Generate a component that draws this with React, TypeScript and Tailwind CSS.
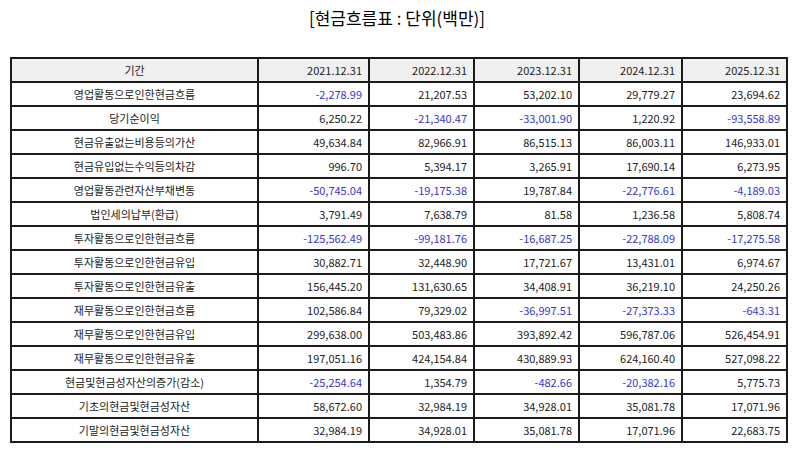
const headers = ['기간', '2021.12.31', '2022.12.31', '2023.12.31', '2024.12.31', '2025.12.31'];

const rows: [string, string[]][] = [
  ['영업활동으로인한현금흐름', ['-2,278.99', '21,207.53', '53,202.10', '29,779.27', '23,694.62']],
  ['당기순이익', ['6,250.22', '-21,340.47', '-33,001.90', '1,220.92', '-93,558.89']],
  ['현금유출없는비용등의가산', ['49,634.84', '82,966.91', '86,515.13', '86,003.11', '146,933.01']],
  ['현금유입없는수익등의차감', ['996.70', '5,394.17', '3,265.91', '17,690.14', '6,273.95']],
  ['영업활동관련자산부채변동', ['-50,745.04', '-19,175.38', '19,787.84', '-22,776.61', '-4,189.03']],
  ['법인세의납부(환급)', ['3,791.49', '7,638.79', '81.58', '1,236.58', '5,808.74']],
  ['투자활동으로인한현금흐름', ['-125,562.49', '-99,181.76', '-16,687.25', '-22,788.09', '-17,275.58']],
  ['투자활동으로인한현금유입', ['30,882.71', '32,448.90', '17,721.67', '13,431.01', '6,974.67']],
  ['투자활동으로인한현금유출', ['156,445.20', '131,630.65', '34,408.91', '36,219.10', '24,250.26']],
  ['재무활동으로인한현금흐름', ['102,586.84', '79,329.02', '-36,997.51', '-27,373.33', '-643.31']],
  ['재무활동으로인한현금유입', ['299,638.00', '503,483.86', '393,892.42', '596,787.06', '526,454.91']],
  ['재무활동으로인한현금유출', ['197,051.16', '424,154.84', '430,889.93', '624,160.40', '527,098.22']],
  ['현금및현금성자산의증가(감소)', ['-25,254.64', '1,354.79', '-482.66', '-20,382.16', '5,775.73']],
  ['기초의현금및현금성자산', ['58,672.60', '32,984.19', '34,928.01', '35,081.78', '17,071.96']],
  ['기말의현금및현금성자산', ['32,984.19', '34,928.01', '35,081.78', '17,071.96', '22,683.75']],
];

const colWidths = ['w-[247px]', 'w-[111px]', 'w-[105px]', 'w-[105px]', 'w-[103px]', 'w-[105px]'];

export default function App() {
  return (
    <div
      className="w-[794px] h-[452px] bg-white px-[10px] pt-[6px] text-[#222]"
      style={{ fontFamily: '"Noto Sans CJK KR", "Noto Sans", sans-serif' }}
    >
      <h1 className="text-center text-[17px] leading-[24px] text-black">[현금흐름표 : 단위(백만)]</h1>
      <table className="mt-[27px] w-[776px] table-fixed border-collapse text-[11px]">
        <colgroup>
          {colWidths.map((w, i) => (
            <col key={i} className={w} />
          ))}
        </colgroup>
        <thead>
          <tr className="h-[24px] bg-[#f0f0f0]">
            {headers.map((h, i) => (
              <th
                key={h}
                className={`border-2 border-[#1a1a1a] font-normal ${i === 0 ? 'text-center' : 'text-right pr-[6px]'}`}
              >
                {h}
              </th>
            ))}
          </tr>
        </thead>
        <tbody>
          {rows.map(([label, values]) => (
            <tr key={label} className="h-[24px]">
              <td className="border-2 border-[#1a1a1a] text-center">{label}</td>
              {values.map((v, i) => (
                <td
                  key={i}
                  className={`border-2 border-[#1a1a1a] text-right pr-[6px] ${v.startsWith('-') ? 'text-[#3535d0]' : ''}`}
                >
                  {v}
                </td>
              ))}
            </tr>
          ))}
        </tbody>
      </table>
    </div>
  );
}
